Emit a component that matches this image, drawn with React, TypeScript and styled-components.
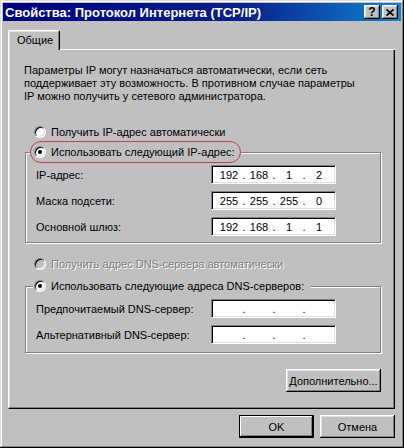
import styled, { createGlobalStyle } from "styled-components";

const GlobalStyle = createGlobalStyle`
  html, body {
    margin: 0;
    padding: 0;
    background: #c0c0c0;
  }
  body {
    font-family: "Liberation Sans", Arial, sans-serif;
    font-size: 11px;
    color: #000;
  }
`;

type IpValue = [string, string, string, string];

const ipRows: { label: string; value: IpValue }[] = [
  { label: "IP-адрес:", value: ["192", "168", "1", "2"] },
  { label: "Маска подсети:", value: ["255", "255", "255", "0"] },
  { label: "Основной шлюз:", value: ["192", "168", "1", "1"] },
];

const dnsRows: { label: string; value: IpValue }[] = [
  { label: "Предпочитаемый DNS-сервер:", value: ["", "", "", ""] },
  { label: "Альтернативный DNS-сервер:", value: ["", "", "", ""] },
];

const IpInput = ({ value }: { value: IpValue }) => (
  <IpField>
    {value.map((octet, i) => (
      <Octets key={i}>
        <Octet>{octet}</Octet>
        {i < 3 && <Dot>.</Dot>}
      </Octets>
    ))}
  </IpField>
);

export default function App() {
  return (
    <>
      <GlobalStyle />
      <Window>
        <TitleBar>
          <Title>Свойства: Протокол Интернета (TCP/IP)</Title>
          <CaptionButtons>
            <CaptionButton>?</CaptionButton>
            <CaptionButton>
              <svg width="8" height="7" viewBox="0 0 8 7">
                <path d="M0.5 0.5 L7.5 6.5 M7.5 0.5 L0.5 6.5" stroke="#000" strokeWidth="1.7" />
              </svg>
            </CaptionButton>
          </CaptionButtons>
        </TitleBar>

        <Body>
          <TabStrip>
            <Tab>Общие</Tab>
            <TabFill />
          </TabStrip>

          <Panel>
            <Description>
              Параметры IP могут назначаться автоматически, если сеть
              <br />
              поддерживает эту возможность. В противном случае параметры
              <br />
              IP можно получить у сетевого администратора.
            </Description>

            <RadioRow $mt={21}>
              <Radio />
              <span>Получить IP-адрес автоматически</span>
            </RadioRow>

            <GroupBox $mt={1} $pt={2} $pb={6}>
              <Legend $ml={-6}>
                <Highlight>
                  <Radio $checked />
                  <span>Использовать следующий IP-адрес:</span>
                </Highlight>
              </Legend>
              <FieldGrid>
                {ipRows.map((row) => (
                  <FieldRow key={row.label}>
                    <FieldLabel>{row.label}</FieldLabel>
                    <IpInput value={row.value} />
                  </FieldRow>
                ))}
              </FieldGrid>
            </GroupBox>

            <RadioRow $mt={13}>
              <Radio $disabled />
              <DisabledText>Получить адрес DNS-сервера автоматически</DisabledText>
            </RadioRow>

            <GroupBox $mt={6} $pt={5} $pb={8}>
              <Legend $ml={-3}>
                <LegendRow>
                  <Radio $checked />
                  <span>Использовать следующие адреса DNS-серверов:</span>
                </LegendRow>
              </Legend>
              <FieldGrid>
                {dnsRows.map((row) => (
                  <FieldRow key={row.label}>
                    <FieldLabel>{row.label}</FieldLabel>
                    <IpInput value={row.value} />
                  </FieldRow>
                ))}
              </FieldGrid>
            </GroupBox>

            <AdvancedButton>Дополнительно...</AdvancedButton>
          </Panel>

          <Footer>
            <Button $default>OK</Button>
            <Button>Отмена</Button>
          </Footer>
        </Body>
      </Window>
    </>
  );
}

const Window = styled.div`
  box-sizing: border-box;
  width: 404px;
  height: 448px;
  padding: 3px;
  background: #c0c0c0;
  box-shadow: inset -1px -1px #000, inset 1px 1px #dfdfdf, inset -2px -2px #808080,
    inset 2px 2px #fff;
  display: flex;
  flex-direction: column;
`;

const TitleBar = styled.div`
  height: 18px;
  display: flex;
  align-items: center;
  padding: 0 3px 0 2px;
  background: linear-gradient(to right, #000080 0%, #08208a 60%, #1084d0 100%);
`;

const Title = styled.span`
  flex: 1;
  color: #fff;
  font-weight: bold;
  font-size: 13px;
  white-space: nowrap;
`;

const CaptionButtons = styled.div`
  display: flex;
  gap: 2px;
`;

const CaptionButton = styled.div`
  box-sizing: border-box;
  width: 16px;
  height: 14px;
  background: #c0c0c0;
  box-shadow: inset -1px -1px #000, inset 1px 1px #fff, inset -2px -2px #808080,
    inset 2px 2px #dfdfdf;
  display: flex;
  align-items: center;
  justify-content: center;
  font-weight: bold;
  font-size: 12px;
  line-height: 1;
`;

const Body = styled.div`
  display: flex;
  flex-direction: column;
  padding: 9px 6px 0 5px;
`;

const TabStrip = styled.div`
  display: flex;
  height: 20px;
`;

const Tab = styled.div`
  box-sizing: border-box;
  width: 52px;
  padding-left: 8px;
  line-height: 19px;
  border-top: 1px solid #fff;
  border-left: 1px solid #fff;
  border-right: 1px solid #000;
  border-radius: 2px 2px 0 0;
  box-shadow: inset -1px 0 #808080, inset 1px 1px #dfdfdf;
`;

const TabFill = styled.div`
  flex: 1;
  border-bottom: 1px solid #fff;
`;

const Panel = styled.div`
  box-sizing: border-box;
  height: 359px;
  border-left: 1px solid #fff;
  border-right: 1px solid #000;
  border-bottom: 1px solid #000;
  box-shadow: inset -1px -1px #808080, inset 1px 0 #dfdfdf;
  padding: 14px 13px 0 15px;
  display: flex;
  flex-direction: column;
`;

const Description = styled.p`
  margin: 0;
  line-height: 13px;
  white-space: nowrap;
`;

const RadioRow = styled.div<{ $mt: number }>`
  display: flex;
  align-items: center;
  gap: 5px;
  height: 16px;
  margin: ${(p) => p.$mt}px 0 0 10px;
`;

const Radio = styled.span<{ $checked?: boolean; $disabled?: boolean }>`
  box-sizing: border-box;
  flex: none;
  width: 12px;
  height: 12px;
  border-radius: 50%;
  border: 1px solid;
  border-color: #808080 #fff #fff #808080;
  box-shadow: inset 1px 1px #000, inset -1px -1px #dfdfdf;
  background: ${(p) => (p.$disabled ? "#c0c0c0" : "#fff")};
  display: flex;
  align-items: center;
  justify-content: center;

  &::after {
    content: "";
    display: ${(p) => (p.$checked ? "block" : "none")};
    width: 4px;
    height: 4px;
    border-radius: 50%;
    background: #000;
  }
`;

const DisabledText = styled.span`
  color: #808080;
  text-shadow: 1px 1px 0 #fff;
`;

const GroupBox = styled.fieldset<{ $mt: number; $pt: number; $pb: number }>`
  margin: ${(p) => p.$mt}px 0 0 1px;
  min-width: 0;
  padding: ${(p) => p.$pt}px 10px ${(p) => p.$pb}px 10px;
  border: 1px solid #808080;
  box-shadow: inset 1px 1px #fff, 1px 1px #fff;
`;

const Legend = styled.legend<{ $ml: number }>`
  padding: 0;
  margin-left: ${(p) => p.$ml}px;
  background: #c0c0c0;
`;

const Highlight = styled.span`
  box-sizing: border-box;
  display: flex;
  align-items: center;
  gap: 5px;
  height: 22px;
  padding: 0 5px 0 3px;
  border: 1px solid #b5474d;
  border-radius: 11px;
`;

const LegendRow = styled.span`
  display: flex;
  align-items: center;
  gap: 5px;
  height: 16px;
  padding: 0 7px 0 1px;
`;

const FieldGrid = styled.div`
  display: flex;
  flex-direction: column;
  gap: 7px;
`;

const FieldRow = styled.div`
  display: grid;
  grid-template-columns: 175px 125px;
  align-items: center;
`;

const FieldLabel = styled.span`
  white-space: nowrap;
`;

const IpField = styled.div`
  box-sizing: border-box;
  width: 125px;
  height: 19px;
  background: #fff;
  border: 1px solid;
  border-color: #808080 #fff #fff #808080;
  box-shadow: inset 1px 1px #000, inset -1px -1px #dfdfdf;
  padding: 1px 0 0 4px;
  display: flex;
  align-items: center;
`;

const Octets = styled.span`
  display: flex;
`;

const Octet = styled.span`
  width: 26px;
  text-align: center;
`;

const Dot = styled.span`
  width: 4px;
  text-align: center;
`;

const ButtonBase = styled.div`
  box-sizing: border-box;
  height: 23px;
  display: flex;
  align-items: center;
  justify-content: center;
  background: #c0c0c0;
`;

const AdvancedButton = styled(ButtonBase)`
  width: 95px;
  align-self: flex-end;
  margin-top: 16px;
  box-shadow: inset -1px -1px #000, inset 1px 1px #fff, inset -2px -2px #808080,
    inset 2px 2px #dfdfdf;
`;

const Footer = styled.div`
  display: flex;
  justify-content: flex-end;
  gap: 6px;
  margin-top: 6px;
`;

const Button = styled(ButtonBase)<{ $default?: boolean }>`
  width: 75px;
  border: ${(p) => (p.$default ? "1px solid #000" : "none")};
  box-shadow: ${(p) =>
    p.$default
      ? "inset -1px -1px #000, inset 1px 1px #fff, inset -2px -2px #808080"
      : "inset -1px -1px #000, inset 1px 1px #fff, inset -2px -2px #808080, inset 2px 2px #dfdfdf"};
`;
